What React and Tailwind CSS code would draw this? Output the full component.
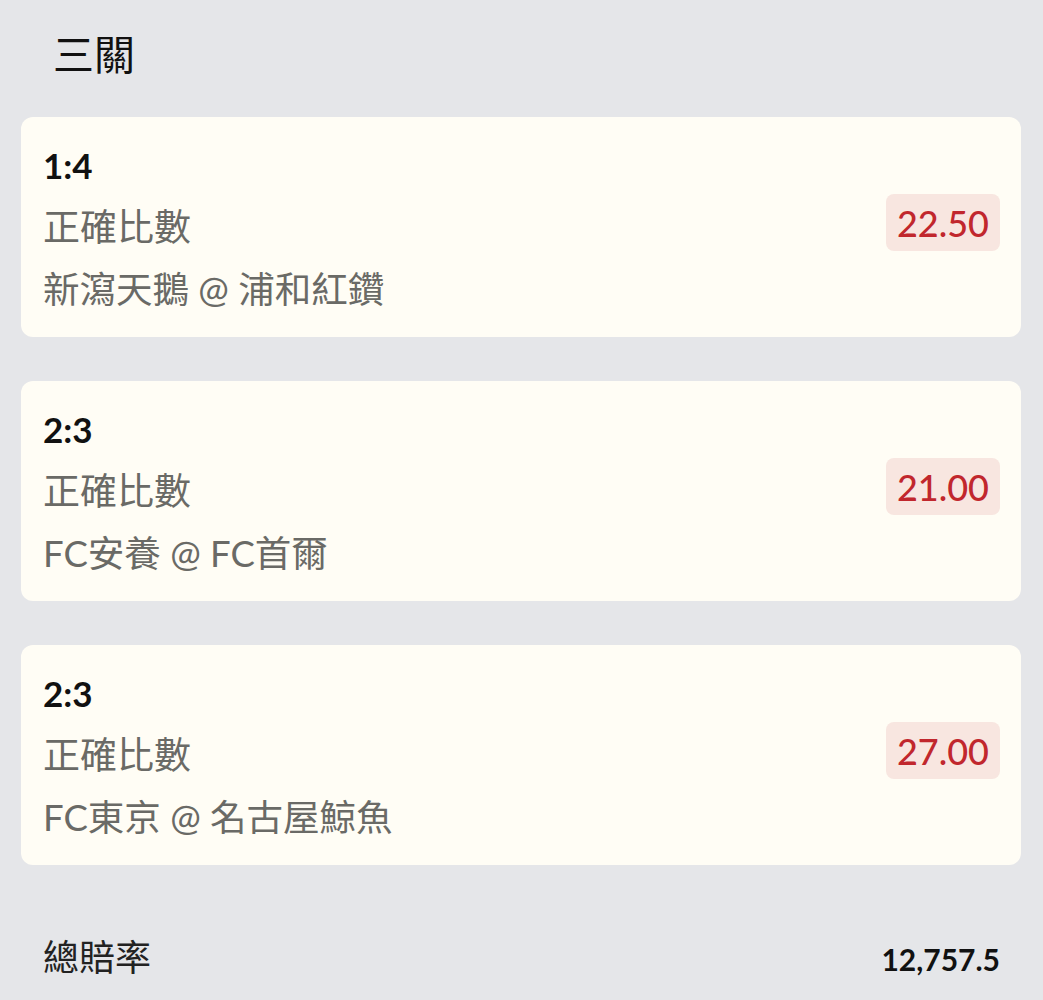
import React from 'react';

const legs = [
  { score: '1:4', market: '正確比數', match: '新瀉天鵝 @ 浦和紅鑽', odds: '22.50' },
  { score: '2:3', market: '正確比數', match: 'FC安養 @ FC首爾', odds: '21.00' },
  { score: '2:3', market: '正確比數', match: 'FC東京 @ 名古屋鯨魚', odds: '27.00' },
];

const font = { fontFamily: 'Lato, "Noto Sans CJK TC", sans-serif' };

function LegCard({ leg }) {
  return (
    <div className="flex items-center justify-between rounded-xl bg-[#fffdf5] pl-[22px] pr-[21px] py-[17px]">
      <div>
        <div className="text-[35px] leading-[62px] font-bold text-[#111]">{leg.score}</div>
        <div className="text-[37px] leading-[62px] text-[#6a6a66]">{leg.market}</div>
        <div className="text-[36.5px] leading-[62px] text-[#6a6a66]">{leg.match}</div>
      </div>
      <div className="-mt-[9px] flex h-[57px] items-center rounded-lg bg-[#f8e6e0] px-[11px] text-[36px] font-medium text-[#c1272d]">
        {leg.odds}
      </div>
    </div>
  );
}

export default function App() {
  return (
    <div style={font} className="min-h-[1000px] w-full bg-[#e5e6e9] pb-8">
      <div className="flex h-[110px] items-center pl-[53px] text-[41px] text-[#111]">三關</div>
      <div className="flex flex-col gap-[44px] pl-[21px] pr-[22px] pt-[7px]">
        {legs.map((leg, i) => (
          <LegCard key={i} leg={leg} />
        ))}
      </div>
      <div className="mt-[61px] flex items-baseline justify-between pl-[43px] pr-[43px]">
        <span className="text-[36px] leading-[62px] text-[#222]">總賠率</span>
        <span className="text-[30px] font-bold text-[#111]">12,757.5</span>
      </div>
    </div>
  );
}
